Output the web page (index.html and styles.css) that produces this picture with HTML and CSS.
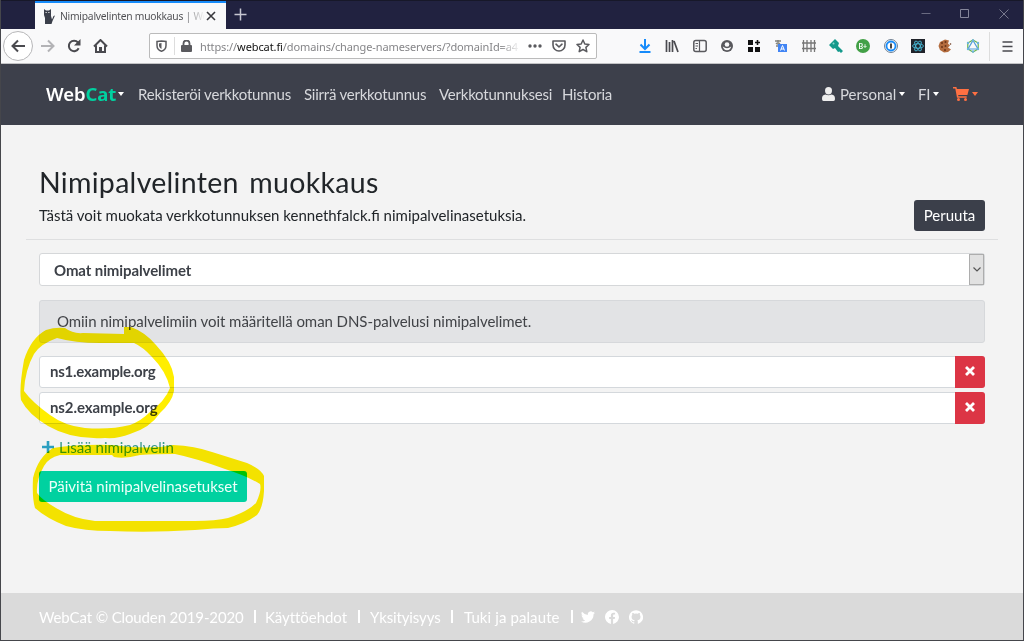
FILE: index.html
```html
<!DOCTYPE html>
<html lang="fi">
<head>
<meta charset="utf-8">
<title>Nimipalvelinten muokkaus | WebCat</title>
<link rel="stylesheet" href="styles.css">
</head>
<body>
<div class="window">
  <div class="tabbar">
    <div class="tab">
      <svg class="favicon" width="12" height="15" viewBox="0 0 12 15"><path fill="#3b3f4a" d="M1 0l2 1.500h3L8 0v7l1 3.500L10.500 7 12 6.500 9.500 12l-1 3H2V9L1 6z"/><path fill="#ddd" d="M2.500 3h1.300v1H2.500zM5.200 3h1.300v1H5.200z"/></svg>
      <span class="tab-title">Nimipalvelinten muokkaus | We</span>
      <svg width="10" height="10" viewBox="0 0 10 10" stroke="#38383d" stroke-width="1.600"><path d="M1 1l8 8M9 1L1 9"/></svg>
    </div>
    <svg class="newtab" width="13" height="13" viewBox="0 0 13 13" stroke="#c7c7d1" stroke-width="1.500"><path d="M6.500 0.500v12M0.500 6.500h12"/></svg>
    <div class="controls">
      <svg width="10" height="10" viewBox="0 0 10 10" stroke="#696a80"><path d="M0.500 4.500h9"/></svg>
      <svg width="10" height="10" viewBox="0 0 10 10" stroke="#85869a" fill="none"><path d="M.5.5h8v8h-8z"/></svg>
      <svg width="10" height="10" viewBox="0 0 10 10" stroke="#77788d"><path d="M.5.5l9 9M9.500.5l-9 9"/></svg>
    </div>
  </div>

  <div class="toolbar">
    <div class="back"><svg width="15" height="14" viewBox="0 0 15 14" fill="none" stroke="#4a4a4f" stroke-width="2"><path d="M14 7H2M7 1.500L1.500 7 7 12.500"/></svg></div>
    <div class="navicons">
      <svg width="15" height="14" viewBox="0 0 15 14" fill="none" stroke="#b3b3b6" stroke-width="2"><path d="M1 7h12M8 1.500L13.500 7 8 12.500"/></svg>
      <svg width="14" height="14" viewBox="0 0 14 14"><path d="M11.700 9.300A5.200 5.200 0 1 1 11 3.500" fill="none" stroke="#4a4a4f" stroke-width="2"/><path d="M13.500 0v6.500H7z" fill="#4a4a4f"/></svg>
      <svg width="15" height="14" viewBox="0 0 15 14"><path d="M1 7.500L7.500 1 14 7.500M3 6.500V13h9V6.500" fill="none" stroke="#4a4a4f" stroke-width="2"/><path d="M6 8h3v5H6z" fill="#4a4a4f"/></svg>
    </div>
    <div class="urlbar">
      <svg width="11" height="12" viewBox="0 0 11 12"><path d="M1 1.500L5.500.9l4.500.6v4C10 8.500 8 10.500 5.500 11.200 3 10.500 1 8.500 1 5.500z" fill="none" stroke="#5a5a5e" stroke-width="1.500"/><path d="M5.500 3v6C4 8 3 7 3 5.500v-2z" fill="#5a5a5e"/></svg>
      <i class="urlsep"></i>
      <svg width="11" height="12" viewBox="0 0 11 12"><rect y="5" width="11" height="7" rx="1" fill="#5a5a5e"/><path d="M2.500 6V3.500a3 3 0 0 1 6 0V6" fill="none" stroke="#5a5a5e" stroke-width="1.800"/></svg>
      <span class="url">https://<b>webcat.fi</b>/domains/change-nameservers/?domainId=a4</span>
      <svg class="dots" width="14" height="4" viewBox="0 0 14 4" fill="#5a5a5e"><circle cx="2" cy="2" r="1.700"/><circle cx="7" cy="2" r="1.700"/><circle cx="12" cy="2" r="1.700"/></svg>
      <svg class="pocket" width="14" height="12" viewBox="0 0 14 12" fill="none" stroke="#5a5a5e" stroke-width="1.600" stroke-linejoin="round"><path d="M1 1h12v4a6 6 0 0 1-12 0z"/><path d="M4 4.200l3 2.800 3-2.800" stroke-linecap="round"/></svg>
      <svg width="14" height="14" viewBox="0 0 14 14" fill="none" stroke="#5a5a5e" stroke-width="1.500" stroke-linejoin="round"><path d="M7 1l1.800 4 4.200.5-3.100 2.900.9 4.300L7 10.500l-3.800 2.200.9-4.300L1 5.500 5.200 5z"/></svg>
    </div>
    <div class="extensions">
      <svg viewBox="0 0 14 14" fill="none" stroke="#168bfa" stroke-width="2"><path d="M7 0v10M2.500 5.500L7 10l4.500-4.500M1.500 13h11"/></svg>
      <svg viewBox="0 0 14 14" stroke="#4a4a4f" stroke-width="1.700"><path d="M1.500 1v12M4.500 3v10M7.500 1v12M9 2l4 11"/></svg>
      <svg viewBox="0 0 14 14" fill="none" stroke="#5a5a5e" stroke-width="1.500"><rect x=".8" y="1.500" width="12.400" height="11" rx="2"/><path d="M6.500 1.500v11M2.500 4.500h2.500M2.500 7h2.500M2.500 9.500h1.500" stroke-width="1.200"/></svg>
      <svg viewBox="0 0 14 14"><circle cx="7" cy="7" r="6" fill="#58585c"/><circle cx="7" cy="5.500" r="2.300" fill="#f9f9fa"/><path d="M2.800 7.500q4.200 3.300 8.400 0-.8 3.700-4.200 3.700T2.800 7.500z" fill="#f9f9fa"/></svg>
      <svg viewBox="0 0 14 14" fill="#111"><rect x="1" y="1" width="5" height="5"/><rect x="1" y="8" width="5" height="5"/><rect x="8" y="8" width="5" height="5"/><path d="M9.700 1h1.600v1.700H13v1.600h-1.700V6H9.700V4.300H8V2.700h1.700z"/></svg>
      <svg viewBox="0 0 14 14"><path d="M1 2h6M4 1v3M2 4c2 2 3 1 4 0M2 7h4" stroke="#83837c" stroke-width="1.500" fill="none"/><rect x="4" y="5" width="9" height="8" fill="#4285f4"/><path d="M6.500 11.500l2-5 2 5M7 10h3" stroke="#fff" fill="none"/></svg>
      <svg viewBox="0 0 14 14" stroke="#777" stroke-width="1.300"><path d="M1.500 1v12M5 1v12M9 1v12M12.500 1v12M0 4h14M0 9.500h14"/></svg>
      <svg viewBox="0 0 14 14"><path d="M0 6l6-6 4 4-1 3 5 5-2 2-1.500-1.500L9 13 6 9l-2 1z" fill="#159a8c"/><circle cx="4.500" cy="4.500" r="1" fill="#8fd5cd"/></svg>
      <svg viewBox="0 0 14 14"><circle cx="7" cy="7" r="7" fill="#43a047"/><text x="2.500" y="9.700" class="badge-text">B+</text></svg>
      <svg viewBox="0 0 14 14"><circle cx="7" cy="7" r="6.500" fill="#eef3f6" stroke="#728293"/><circle cx="7" cy="7" r="4.500" fill="#fff" stroke="#168bfa" stroke-width="1.800"/><path d="M7 4.500v5" stroke="#333" stroke-width="1.800"/></svg>
      <svg viewBox="0 0 14 14"><path fill="#20232a" d="M0 0h14v14H0z"/><g fill="none" stroke="#4bc7e6" stroke-width=".8"><ellipse cx="7" cy="7" rx="5.500" ry="2.200"/><ellipse cx="7" cy="7" rx="5.500" ry="2.200" transform="rotate(60 7 7)"/><ellipse cx="7" cy="7" rx="5.500" ry="2.200" transform="rotate(120 7 7)"/></g></svg>
      <svg viewBox="0 0 14 14"><path fill="#b46c3e" d="M7 .5l4 1-1 3 2 2-2 2 3 2-3 2.500-4 .5-4-2.500-1.500-4L2 3z"/><g fill="#6b3519"><circle cx="4" cy="4" r="1"/><circle cx="7.500" cy="3" r="1"/><circle cx="4" cy="8" r="1"/><circle cx="7.500" cy="7" r="1"/><circle cx="7" cy="11" r="1"/><circle cx="12.500" cy="5" r=".8"/></g></svg>
      <svg viewBox="0 0 14 14" fill="none" stroke-width="1.200"><path d="M7 1l5.200 3v6L7 13 1.800 10V4z" stroke="#69b34c"/><path d="M7 1.500L12 10H2z" stroke="#519dd9"/><g fill="#6cb4dd"><circle cx="7" cy="1.500" r="1.200"/><circle cx="2" cy="4" r="1.200"/><circle cx="12" cy="4" r="1.200"/><circle cx="2" cy="10" r="1.200"/><circle cx="12" cy="10" r="1.200"/><circle cx="7" cy="12.500" r="1.200"/></g></svg>
    </div>
    <div class="menu"><svg width="11" height="11" viewBox="0 0 11 11" stroke="#4a4a4f" stroke-width="1.500"><path d="M.5 1h10M.5 5.500h10M.5 10h10"/></svg></div>
  </div>

  <nav class="navbar">
    <div class="brand"><span>Web<em>Cat</em></span><i class="caret"></i></div>
    <a class="n1">Rekisteröi verkkotunnus</a>
    <a class="n2">Siirrä verkkotunnus</a>
    <a class="n3">Verkkotunnuksesi</a>
    <a class="n4">Historia</a>
    <div class="account">
      <svg width="13" height="14" viewBox="0 0 13 14" fill="#eee"><ellipse cx="6.500" cy="3.700" rx="3.500" ry="3.700"/><path d="M0 12c0-3 1-4 3.500-4.500Q6.500 9 9.500 7.500C12 8 13 9 13 12q0 2-1.500 2h-10Q0 14 0 12z"/></svg>
      <span class="personal">Personal</span><i class="caret"></i>
      <span class="lang">FI</span><i class="caret"></i>
      <svg class="cart" width="16" height="14" viewBox="0 0 16 14" fill="#ff7042"><path d="M0 0h3.400l.5 2H16l-1.600 6H5.200l.2 1.200h8.300v1.500H4L2.300 1.500H0z"/><circle cx="5.500" cy="12.400" r="1.500"/><circle cx="12.500" cy="12.400" r="1.500"/></svg>
      <i class="caret orange"></i>
    </div>
  </nav>

  <main class="content">
    <header class="page-head">
      <div>
        <h1>Nimipalvelinten muokkaus</h1>
        <p>Tästä voit muokata verkkotunnuksen kennethfalck.fi nimipalvelinasetuksia.</p>
      </div>
      <button class="cancel">Peruuta</button>
    </header>
    <div class="select"><span>Omat nimipalvelimet</span><div class="arrow"><svg width="8" height="5" viewBox="0 0 8 5" fill="none" stroke="#555" stroke-width="1.200"><path d="M.5.5L4 4 7.500.5"/></svg></div></div>
    <div class="notice">Omiin nimipalvelimiin voit määritellä oman DNS-palvelusi nimipalvelimet.</div>
    <div class="server"><span class="ns1">ns1.example.org</span><button><svg width="10" height="10" viewBox="0 0 10 10" stroke="#fff" stroke-width="2.800"><path d="M1 1l8 8M9 1L1 9"/></svg></button></div>
    <div class="server"><span>ns2.example.org</span><button><svg width="10" height="10" viewBox="0 0 10 10" stroke="#fff" stroke-width="2.800"><path d="M1 1l8 8M9 1L1 9"/></svg></button></div>
    <a class="add"><svg width="12" height="12" viewBox="0 0 12 12" stroke="#2b9fc0" stroke-width="2.600"><path d="M6 0v12M0 6h12"/></svg><span>Lisää nimipalvelin</span></a>
    <button class="submit">Päivitä nimipalvelinasetukset</button>
  </main>

  <footer class="footer">
    <span class="f1">WebCat © Clouden 2019-2020</span><i></i>
    <span class="f2">Käyttöehdot</span><i></i>
    <span class="f3">Yksityisyys</span><i></i>
    <span class="f4">Tuki ja palaute</span><i></i>
    <div class="social">
      <svg width="14" height="14" viewBox="0 0 24 24" fill="#fff"><path d="M24 4.600a10 10 0 0 1-2.800.8 5 5 0 0 0 2.100-2.700 10 10 0 0 1-3.100 1.200 4.900 4.900 0 0 0-8.400 4.500A14 14 0 0 1 1.700 3.100a4.900 4.900 0 0 0 1.500 6.600 5 5 0 0 1-2.200-.6 4.900 4.900 0 0 0 3.900 4.900 5 5 0 0 1-2.200.1 4.900 4.900 0 0 0 4.600 3.400A10 10 0 0 1 0 19.500 14 14 0 0 0 21.500 7.100 10 10 0 0 0 24 4.600z"/></svg>
      <svg width="14" height="14" viewBox="0 0 24 24" fill="#fff"><path d="M24 12a12 12 0 1 0-13.900 11.900v-8.400H7.100V12h3V9.400c0-3 1.800-4.700 4.600-4.700 1.300 0 2.600.2 2.600.2v3h-1.500c-1.500 0-1.900.9-1.900 1.800V12h3.300l-.5 3.500h-2.800v8.400A12 12 0 0 0 24 12z"/></svg>
      <svg width="14" height="14" viewBox="0 0 24 24" fill="#fff"><path d="M12 .3a12 12 0 0 0-3.800 23.400c.6.100.8-.3.800-.6v-2.200c-3.300.7-4-1.400-4-1.400-.6-1.400-1.400-1.800-1.400-1.800-1-.7.100-.7.100-.7 1.200.1 1.900 1.200 1.900 1.200 1 1.800 2.800 1.300 3.500 1 .1-.8.400-1.300.8-1.600-2.700-.3-5.500-1.300-5.500-5.900 0-1.300.5-2.400 1.200-3.200 0-.4-.5-1.600.2-3.200 0 0 1-.3 3.300 1.200a11 11 0 0 1 6 0c2.300-1.500 3.300-1.200 3.300-1.200.7 1.600.2 2.800.1 3.200.8.800 1.200 1.900 1.200 3.200 0 4.600-2.800 5.600-5.500 5.900.5.400.9 1.100.9 2.200v3.300c0 .3.200.7.800.6A12 12 0 0 0 12 .3z"/></svg>
    </div>
  </footer>

  <svg class="marker" viewBox="0 0 1024 641" fill="#ffee00" fill-rule="evenodd">
    <path d="M46 330Q55 327 65 328Q73 334 83 333L124 334V327L131 327Q145 332 156 345Q172 362 174 377V391Q172 402 160 413Q150 428 130 434Q118 439 105 438Q72 440 48 426Q28 414 21 400Q19 388 24 360Q31 338 46 330ZM57 338Q40 344 34 354Q25 370 24 391Q32 402 50 415Q65 426 85 428Q110 430 130 425Q141 421 150 412Q165 401 170 388Q166 371 152 357Q143 347 134 343H100Q75 343 57 338Z"/>
    <path d="M53 448Q80 444 112 445Q150 450 173 445Q195 446 212 452L247 463Q261 469 264 476V491Q263 508 257 515Q245 524 228 528Q215 528 195 530Q150 533 110 531Q84 531 66 526Q46 518 35 508Q32 498 33 478Q38 457 53 448ZM60 455Q48 458 44 466Q36 480 37 493Q42 500 56 508Q74 519 95 521H195Q216 521 228 518Q247 512 256 503Q262 490 260 484Q247 476 225 469Q195 458 175 454Q155 454 140 455Q125 459 114 457L112 455Z"/>
  </svg>
</div>
</body>
</html>
```
FILE: styles.css
```css
* { box-sizing: border-box; }
body { margin: 0; background: #45464b; font-family: Lato, sans-serif; }
svg { display: block; flex: none; }
span, a, h1, p { white-space: nowrap; }
button { font: inherit; border: 0; padding: 0; }
.window { position: relative; width: 1024px; height: 641px; padding: 0 1px 1px; display: flex; flex-direction: column; overflow: hidden; }
.tabbar { height: 29px; flex: none; background: #212240; border-top: 1px solid #171829; display: flex; padding-left: 34px; }
.tab { width: 191px; background: #f9f9fa; border-top: 2px solid #168bfa; display: flex; align-items: center; padding: 0 10px 0 8px; justify-content: space-between; }
.tab-title { font: 10.300px "Noto Sans"; width: 144px; margin-left: 3px; letter-spacing: -.25px; color: transparent; background: linear-gradient(90deg, #4c4c50 85%, #f2f2f2 100%); background-clip: text; }
.newtab { margin: 7px 0 0 8px; }
.controls { margin: 8px 14px 0 auto; display: flex; gap: 29px; }
.toolbar { height: 35px; flex: none; background: #f9f9fa; border-bottom: 1px solid #c3c3c5; display: flex; align-items: center; padding-left: 2px; }
.back { width: 30px; height: 30px; border: 1px solid #b7b7b9; border-radius: 50%; background: #fff; display: grid; place-items: center; }
.navicons { display: flex; gap: 12px; margin-left: 7px; }
.urlbar { width: 448px; height: 26px; margin-left: 41px; border: 1px solid #bbb; border-radius: 2px; background: #fff; display: flex; align-items: center; padding: 0 6px; }
.urlsep { width: 1px; height: 18px; background: #ddd; margin: 0 6px 0 7px; }
.url { font: 11px "Noto Sans"; letter-spacing: -.1px; width: 322px; margin-left: 8px; color: #858588; mask-image: linear-gradient(90deg, #000 93%, transparent); }
.url b { font-weight: 400; color: #111; }
.dots { margin-left: 7px; }
.pocket { margin: 0 10px 0 10px; }
.extensions { display: flex; gap: 13.300px; margin-left: 41px; }
.extensions svg { width: 14px; height: 14px; }
.badge-text { font: bold 7px Lato; fill: #fff; }
.menu { height: 29px; border-left: 1px solid #ddd; margin-left: 9px; padding-left: 12px; display: flex; align-items: center; }
.navbar { height: 61px; flex: none; background: #3d404b; display: flex; align-items: center; padding: 0 45px 2px 45px; color: #d7d8dc; font-size: 15px; letter-spacing: -.22px; }
.brand { width: 92px; display: flex; align-items: center; font: 600 18.500px "Noto Sans"; letter-spacing: -.1px; color: #fff; }
.brand span { width: 70px; }
.brand em { font-style: normal; font-weight: 700; color: #00d1a0; }
.caret { flex: none; margin-left: 2px; border: 3.500px solid transparent; border-top: 4px solid #fff; border-bottom: 0; }
.n1 { width: 166px; }
.n2 { width: 135px; }
.n3 { width: 123px; }
.account { display: flex; align-items: center; margin-left: auto; }
.personal { width: 56px; margin: 0 1px 0 5px; letter-spacing: 0; }
.lang { width: 13px; margin-left: 13px; }
.cart { margin: 0 1px 0 14px; }
.orange { border-top-color: #ff7042; }
.content { flex: 1; background: #f3f3f3; padding: 40px 38px 0; color: #212529; font-size: 15px; }
.page-head { height: 75px; margin: 0 -13px; padding: 0 13px; border-bottom: 1px solid #dedfe0; display: flex; justify-content: space-between; }
h1 { margin: 0; font-size: 28.500px; line-height: 34px; font-weight: 400; letter-spacing: .3px; word-spacing: 3px; }
p { margin: 6px 0 0; line-height: 20px; }
.cancel { width: 71px; height: 31px; margin-top: 35px; padding-bottom: 1px; border-radius: 3px; background: #3b3f4a; color: #fff; }
.select { height: 33px; margin-top: 13px; border: 1px solid #d5d7d9; border-radius: 3px; background: #fff; display: flex; align-items: center; justify-content: space-between; padding-left: 14px; font-weight: 700; letter-spacing: -.1px; color: #3d4148; }
.arrow { width: 15px; height: 31px; background: #e1e1e1; border: 1px solid #adadad; display: grid; place-items: center; }
.notice { height: 43px; margin: 14px 0 13px; padding-left: 17px; border: 1px solid #d6d8db; border-radius: 3px; background: #e2e3e5; color: #414347; line-height: 40px; letter-spacing: -.06px; white-space: nowrap; }
.server { height: 32px; margin-bottom: 4px; border: 1px solid #d4d8dc; border-radius: 3px; background: #fff; display: flex; align-items: center; justify-content: space-between; padding-left: 10px; font-weight: 700; color: #3d4148; }
.server span { padding-bottom: 2px; letter-spacing: -.1px; }
.server .ns1 { letter-spacing: -.25px; }
.server button { width: 30px; height: 32px; margin-right: -1px; border-radius: 0 3px 3px 0; background: #dc3545; display: grid; place-items: center; padding-bottom: 3px; }
.add { display: flex; align-items: center; height: 20px; margin-top: 13px; padding-left: 3px; gap: 5px; color: #3b9b8b; }
.add span { padding-bottom: 1px; }
.submit { display: block; width: 208px; height: 31px; margin-top: 14px; padding-bottom: 1px; border-radius: 3px; background: #00d1a0; color: #edfffa; white-space: nowrap; }
.footer { height: 47px; flex: none; background: #dadada; display: flex; align-items: center; padding-left: 38px; color: #fff; font-size: 15px; letter-spacing: -.13px; }
.footer i { width: 1.500px; height: 13px; background: #fff; margin-right: -.5px; }
.f1 { width: 215px; }
.f2 { width: 93px; margin-left: 10px; letter-spacing: -.05px; }
.f3 { width: 81px; margin-left: 11px; }
.f4 { width: 107px; margin-left: 12px; letter-spacing: .1px; }
.social { display: flex; gap: 10px; margin-left: 9px; }
.marker { position: absolute; inset: 0; width: 1024px; height: 641px; mix-blend-mode: multiply; pointer-events: none; }
```
